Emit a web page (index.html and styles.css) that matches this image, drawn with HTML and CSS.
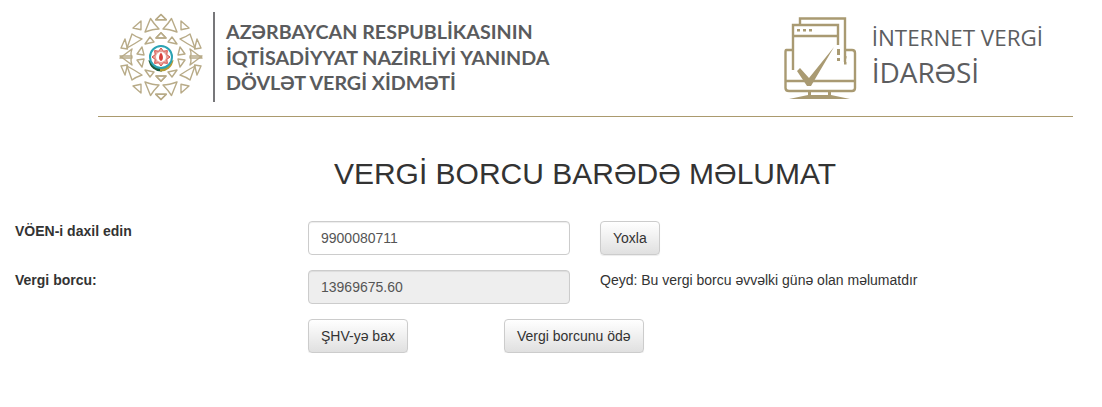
FILE: index.html
```html
<!DOCTYPE html>
<html lang="az">
<head>
  <meta charset="UTF-8">
  <meta name="viewport" content="width=device-width, initial-scale=1.0">
  <title>Vergi borcu barədə məlumat</title>
  <link rel="stylesheet" href="styles.css">
</head>
<body>
  <header class="basliq">
    <div class="qurum">
      <svg class="gerb" width="86" height="88" viewBox="-43 -44 86 88">
        <defs>
          <g id="rub" fill="none" stroke="#b8ab88" stroke-width="1.4" stroke-linejoin="round">
            <path d="M0 -42.5 L5.3 -37.3 L-5.3 -37.3 Z"/>
            <path d="M10.5 -38.5 L16 -25 Q8 -28 2 -28 Q7 -33 10.5 -38.5 Z"/>
            <path d="M20 -36 L28 -29 L20 -27.3 Z"/>
            <path d="M29 -23 L34 -9 Q25 -14 19 -18 Q25 -20 29 -23 Z"/>
            <path d="M36 -18 L40 -9 L33.5 -8 Z"/>
            <path d="M29 -8 L41 1 L29 1 Q31 -3 29 -8 Z"/>
            <path d="M0 -24.3 L5 -19 L-5 -19 Z"/>
            <path d="M11 -20 L16 -13 L7 -15 Z"/>
            <path d="M19 -10 L24 -3 L17 -2 Z"/>
            <path d="M3 -18 L-1 -14 L-3 -18"  stroke="none"/>
          </g>
          <g id="yarim">
            <use href="#rub"/>
            <use href="#rub" transform="scale(1 -1)"/>
          </g>
        </defs>
        <use href="#yarim"/>
        <use href="#yarim" transform="scale(-1 1)"/>
        <path d="M-12.5 3 A13 13 0 0 0 1 14.5 L1 9 Z" fill="#1d5a3a"/>
        <path d="M12.5 3 A13 13 0 0 1 -1 14.5 L-1 9 Z" fill="#b39b35"/>
        <circle r="11" fill="#fff" stroke="#2ba3b4" stroke-width="2"/>
        <path d="M0 -9 L2.4 -5.8 L6.4 -6.4 L5.8 -2.4 L9 0 L5.8 2.4 L6.4 6.4 L2.4 5.8 L0 9 L-2.4 5.8 L-6.4 6.4 L-5.8 2.4 L-9 0 L-5.8 -2.4 L-6.4 -6.4 L-2.4 -5.8 Z" fill="#e9a49c" stroke="#d8504a" stroke-width="1"/>
        <circle r="5" fill="#fff"/>
        <path d="M0 -4.5 C2.6 -1.5 2.6 3 0 4 C-2.6 3 -2.6 -1.5 0 -4.5 Z" fill="#d8403c"/>
      </svg>
      <div class="qurum-ad">
        <div>AZƏRBAYCAN RESPUBLİKASININ</div>
        <div>İQTİSADİYYAT NAZİRLİYİ YANINDA</div>
        <div>DÖVLƏT VERGİ XİDMƏTİ</div>
      </div>
    </div>
    <div class="idare">
      <svg class="monitor" width="76" height="84" viewBox="0 0 76 84">
        <g fill="none" stroke="#a99a72" stroke-width="2.4">
          <path d="M18 9 V3.5 H63 V47"/>
          <path d="M11 55 V10 H56 V30"/>
          <path d="M11 21 H56"/>
          <path d="M11 35 H4 Q3.5 35 3.5 38 V73 Q3.5 76 7 76 H70 Q73 76 73 73 V38 Q73 35 70 35 H63"/>
          <path d="M3.5 66 H73"/>
        </g>
        <path d="M15 56 L18 53 L27 63 L52 32 L29 71 L25 71 Z" fill="#a99a72"/>
        <g fill="#a99a72">
          <rect x="15" y="14" width="3" height="2.5"/>
          <rect x="21" y="14" width="3" height="2.5"/>
          <rect x="27" y="14" width="3" height="2.5"/>
          <rect x="55" y="34" width="3" height="6"/>
          <rect x="55" y="43" width="3" height="3"/>
          <rect x="62" y="41" width="2.5" height="2.5"/>
          <rect x="62" y="47" width="2.5" height="2.5"/>
          <rect x="26" y="77" width="3" height="5"/>
          <rect x="46" y="77" width="3" height="5"/>
          <path d="M7 84 L26 80 H49 L68 84 Z"/>
        </g>
      </svg>
      <div class="idare-ad">
        <div class="idare-ust">İNTERNET VERGİ</div>
        <div class="idare-alt">İDARƏSİ</div>
      </div>
    </div>
  </header>

  <h1 class="sehife-ad">VERGİ BORCU BARƏDƏ MƏLUMAT</h1>

  <form class="forma">
    <label class="etiket" for="voen">VÖEN-i daxil edin</label>
    <input class="sahe" type="text" id="voen" value="9900080711">
    <div><button class="duyme" type="button">Yoxla</button></div>

    <label class="etiket" for="borc">Vergi borcu:</label>
    <input class="sahe" type="text" id="borc" value="13969675.60" readonly>
    <p class="qeyd">Qeyd: Bu vergi borcu əvvəlki günə olan məlumatdır</p>

    <div class="duymeler">
      <button class="duyme" type="button">ŞHV-yə bax</button>
      <button class="duyme" type="button">Vergi borcunu ödə</button>
    </div>
  </form>
</body>
</html>
```

FILE: styles.css
```css
* {
  box-sizing: border-box;
}

body {
  margin: 0;
  font-family: "Liberation Sans", Arial, sans-serif;
  font-size: 14px;
  color: #333;
  background: #fff;
}

.basliq {
  display: flex;
  justify-content: space-between;
  height: 117px;
  margin: 0 29px 0 98px;
  padding: 12px 30px 0 20px;
  border-bottom: 1px solid #ab9a6e;
}

.qurum {
  display: flex;
  align-items: flex-start;
}

.gerb {
  margin-top: 1px;
}

.qurum-ad {
  height: 90px;
  margin-left: 9px;
  padding: 7px 0 0 11px;
  border-left: 2px solid #77777a;
  font-family: Lato, sans-serif;
  font-weight: 700;
  font-size: 19.7px;
  line-height: 25.5px;
  color: #5a5b5d;
}

.idare {
  display: flex;
  align-items: flex-start;
}

.monitor {
  margin: 3px 14px 0 0;
}

.idare-ad {
  font-family: "Open Sans", sans-serif;
  color: #5c5d5f;
  padding-top: 10px;
}

.idare-ust {
  font-size: 22.4px;
  line-height: 32px;
}

.idare-alt {
  font-size: 28px;
  font-weight: 500;
  line-height: 36px;
}

.sehife-ad {
  margin: 39px 0 0;
  padding-left: 68px;
  text-align: center;
  font-size: 30px;
  font-weight: 400;
  line-height: 36px;
}

.forma {
  display: grid;
  grid-template-columns: 263px 262px auto;
  column-gap: 30px;
  row-gap: 15px;
  margin-top: 29px;
  padding-left: 15px;
}

.etiket {
  font-weight: 700;
  line-height: 20px;
}

.sahe {
  height: 34px;
  padding: 6px 12px;
  font: inherit;
  color: #555;
  border: 1px solid #ccc;
  border-radius: 4px;
  background: #fff;
  box-shadow: inset 0 1px 1px rgba(0, 0, 0, 0.075);
}

.sahe[readonly] {
  background: #eee;
}

.duyme {
  height: 34px;
  padding: 6px 12px;
  font: inherit;
  color: #333;
  border: 1px solid #ccc;
  border-radius: 4px;
  background: linear-gradient(to bottom, #fff, #e0e0e0);
  box-shadow: inset 0 1px 0 rgba(255, 255, 255, 0.15), 0 1px 1px rgba(0, 0, 0, 0.075);
}

.qeyd {
  margin: 0;
  line-height: 20px;
}

.duymeler {
  grid-column: 2 / 4;
  display: flex;
  gap: 96px;
}
```
